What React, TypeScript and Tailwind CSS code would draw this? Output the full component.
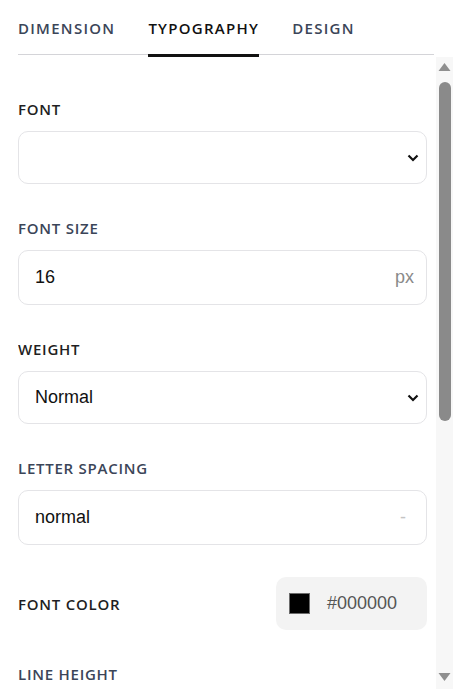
import React from "react";

const LABEL = "font-['Open_Sans',sans-serif] text-[15px] font-semibold uppercase leading-5 tracking-[0.05em]";
const VALUE = "font-['Liberation_Sans',Arial,sans-serif] text-[18px]";

function Chevron() {
  return (
    <svg width="12" height="8" viewBox="0 0 12 8" className="shrink-0">
      <path d="M1.5 1.5 L6 6 L10.5 1.5" fill="none" stroke="#111" strokeWidth="2.2" />
    </svg>
  );
}

function Label({ text, dark }: { text: string; dark?: boolean }) {
  return <div className={`${LABEL} ${dark ? "text-[#1f1f23]" : "text-[#3b4558]"}`}>{text}</div>;
}

function SelectField({ label, value }: { label: string; value?: string }) {
  return (
    <div className="flex flex-col gap-3">
      <Label text={label} dark />
      <div className="flex h-[53px] items-center justify-between rounded-[10px] border border-[#e4e4e7] bg-white pl-4 pr-[7px]">
        <span className={`${VALUE} text-[#111]`}>{value}</span>
        <Chevron />
      </div>
    </div>
  );
}

function InputField({ label, value, suffix, faint }: { label: string; value: string; suffix: string; faint?: boolean }) {
  return (
    <div className="flex flex-col gap-3">
      <Label text={label} />
      <div className="flex h-[55px] items-center justify-between rounded-[10px] border border-[#e4e4e7] bg-white pl-4 pr-3">
        <span className={`${VALUE} text-[#111]`}>{value}</span>
        <span className={`${VALUE} ${faint ? "text-[#c4c4c4] text-[14px] pr-2" : "text-[#8a8a8a]"}`}>{suffix}</span>
      </div>
    </div>
  );
}

// drawn scrollbar: the browser here hides native ones
function Scrollbar() {
  return (
    <div className="flex w-[17px] shrink-0 flex-col items-center bg-[#f7f7f7]">
      <svg width="13" height="10" viewBox="0 0 13 10" className="mt-[5px]">
        <path d="M6.5 1 L12.5 9 L0.5 9 Z" fill="#8f8f8f" />
      </svg>
      <div className="mt-[10px] h-[339px] w-[12px] rounded-full bg-[#8a8a8a]" />
      <div className="flex-1" />
      <svg width="13" height="10" viewBox="0 0 13 10" className="mb-[7px]">
        <path d="M0.5 1 L12.5 1 L6.5 9 Z" fill="#8f8f8f" />
      </svg>
    </div>
  );
}

export default function App() {
  const tabs = ["Dimension", "Typography", "Design"];
  return (
    <div className="h-[689px] w-[453px] overflow-hidden bg-white pl-[18px]">
      <div className="mr-[19px] flex gap-[33px] border-b border-[#d4d4d8]">
        {tabs.map((t) => (
          <button
            key={t}
            className={`-mb-[3px] border-b-[3px] pt-[18px] pb-[16px] font-['Open_Sans',sans-serif] text-[15px] font-semibold uppercase leading-5 tracking-[0.085em] ${
              t === "Typography" ? "border-[#111] text-[#111]" : "border-transparent text-[#3b4558]"
            }`}
          >
            {t}
          </button>
        ))}
      </div>

      <div className="mt-[2px] flex h-[632px]">
        <div className="flex-1 overflow-hidden">
          <div className="flex flex-col gap-[34px] pt-[42px] pr-[9px] pb-[70px]">
            <SelectField label="Font" />
            <InputField label="Font size" value="16" suffix="px" />
            <SelectField label="Weight" value="Normal" />
            <InputField label="Letter spacing" value="normal" suffix="-" faint />
            <div className="-mt-[2px] flex items-center justify-between">
              <Label text="Font color" dark />
              <div className="flex h-[53px] w-[151px] items-center gap-[17px] rounded-[10px] bg-[#f3f3f3] pl-[13px]">
                <span className="h-[21px] w-[21px] border border-[#6b6b6b] bg-black" />
                <span className={`${VALUE} text-[#555]`}>#000000</span>
              </div>
            </div>
            <InputField label="Line height" value="normal" suffix="-" faint />
            <SelectField label="Text align" value="Left" />
          </div>
        </div>
        <Scrollbar />
      </div>
    </div>
  );
}
